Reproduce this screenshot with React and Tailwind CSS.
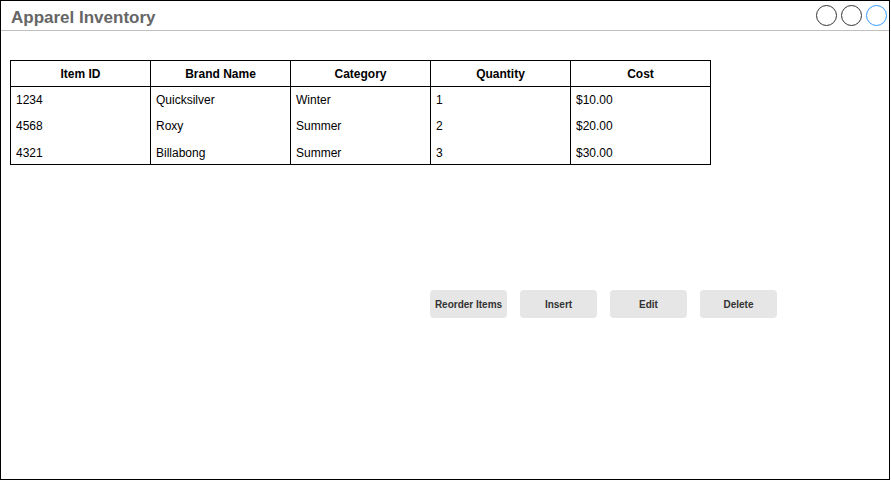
import React from 'react';

const rows = [
  ['1234', 'Quicksilver', 'Winter', '1', '$10.00'],
  ['4568', 'Roxy', 'Summer', '2', '$20.00'],
  ['4321', 'Billabong', 'Summer', '3', '$30.00'],
];

const headers = ['Item ID', 'Brand Name', 'Category', 'Quantity', 'Cost'];

const App = () => {
  return (
    <div className="w-[891px] h-[481px] bg-white" style={{ fontFamily: '"Liberation Sans", Arial, sans-serif' }}>
      <div className="w-[890px] h-[480px] border border-black flex flex-col">
        <div className="h-[30px] border-b border-[#c0c0c0] flex items-center justify-between pl-[10px] pr-[2px]">
          <span className="text-[17px] font-bold text-[#666666] leading-none mt-[3px]">Apparel Inventory</span>
          <div className="flex gap-[4px] mt-[-1px]">
            <span className="w-[21px] h-[21px] rounded-full border border-[#333333]" />
            <span className="w-[21px] h-[21px] rounded-full border border-[#333333]" />
            <span className="w-[21px] h-[21px] rounded-full border border-[#3399ff]" />
          </div>
        </div>

        <table className="ml-[9px] mt-[29px] w-[701px] border-collapse text-[12px] text-black table-fixed">
          <thead>
            <tr className="h-[26px]">
              {headers.map(h => (
                <th key={h} className="border border-black font-bold text-center w-[140px]">{h}</th>
              ))}
            </tr>
          </thead>
          <tbody>
            {rows.map((r, i) => (
              <tr key={i} className={i === rows.length - 1 ? 'h-[26px] align-top' : 'h-[26px]'}>
                {r.map((c, j) => (
                  <td
                    key={j}
                    className={`border-x border-black pl-[5px] ${i === rows.length - 1 ? 'border-b pt-[5px]' : ''}`}
                  >
                    {c}
                  </td>
                ))}
              </tr>
            ))}
          </tbody>
        </table>

        <div className="ml-[429px] mt-[125px] flex gap-[13px]">
          {['Reorder Items', 'Insert', 'Edit', 'Delete'].map(b => (
            <button
              key={b}
              type="button"
              className="w-[77px] h-[28px] rounded-[4px] bg-[#e6e6e6] text-[10px] font-bold text-[#333333]"
            >
              {b}
            </button>
          ))}
        </div>
      </div>
    </div>
  );
};

export default App;
